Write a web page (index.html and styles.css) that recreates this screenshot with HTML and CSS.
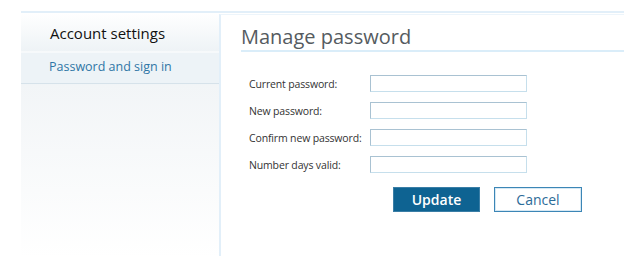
FILE: index.html
```html
<!DOCTYPE html>
<html lang="en">
<head>
    <meta charset="UTF-8">
    <title>Manage password</title>
    <link rel="stylesheet" href="styles.css">
</head>
<body>
    <div class="layout">
        <div class="sidebar">
            <div class="sidebar-title">Account settings</div>
            <a class="nav-item" href="#">Password and sign in</a>
        </div>

        <div class="main">
            <h1>Manage password</h1>

            <form class="password-form">
                <div class="row">
                    <label for="current">Current password:</label>
                    <input type="password" id="current">
                </div>
                <div class="row">
                    <label for="newpass">New password:</label>
                    <input type="password" id="newpass">
                </div>
                <div class="row">
                    <label for="confirm">Confirm new password:</label>
                    <input type="password" id="confirm">
                </div>
                <div class="row">
                    <label for="days">Number days valid:</label>
                    <input type="text" id="days">
                </div>

                <div class="actions">
                    <button type="submit" class="btn btn-primary">Update</button>
                    <button type="button" class="btn btn-secondary">Cancel</button>
                </div>
            </form>
        </div>
    </div>
</body>
</html>
```

FILE: styles.css
```css
body {
    margin: 0;
    background: #fff;
    font-family: 'Open Sans', 'DejaVu Sans', sans-serif;
    color: #333;
}
.layout {
    display: flex;
    margin: 11px 0 0 21px;
    height: 245px;
    border-top: 2px solid #e2eff9;
}
.sidebar {
    width: 198px;
    background: linear-gradient(to bottom, #fff 0, #eef3f6 38px, #fff 39px, #edf3f7 40px, #edf3f7 70px, #f2f5f7 72px, #fff 100%);
}
.sidebar-title {
    height: 38px;
    padding-left: 29px;
    font-size: 15px;
    line-height: 40px;
    color: #111;
}
.nav-item {
    display: block;
    height: 31px;
    margin-top: 1px;
    padding-left: 28px;
    font-size: 12.5px;
    line-height: 29px;
    color: #2f76a6;
    text-decoration: none;
    border-bottom: 1px solid #d6e2ea;
}
.main {
    flex: 1;
    margin-top: 1px;
    padding-left: 20px;
    border-left: 2px solid #e2eff9;
    border-top: 1px solid #edf5fb;
}
h1 {
    margin: 0;
    padding: 9px 0 0;
    height: 26px;
    font-size: 20px;
    font-weight: normal;
    line-height: 25px;
    color: #555b60;
    border-bottom: 2px solid #daedf9;
}
.password-form {
    padding: 23px 0 0 8px;
}
.row {
    display: flex;
    align-items: center;
    height: 17px;
    margin-bottom: 10px;
}
label {
    width: 121px;
    font-size: 10.5px;
    letter-spacing: -0.15px;
    white-space: nowrap;
    color: #333;
}
input {
    box-sizing: border-box;
    width: 157px;
    height: 17px;
    margin: 0;
    border: 1px solid #c6dfec;
    border-left-color: #a9c2d2;
    border-top-color: #a9c2d2;
    background: #fff;
}
.actions {
    display: flex;
    gap: 14px;
    margin: 14px 0 0 144px;
}
.btn {
    box-sizing: border-box;
    width: 88px;
    height: 25px;
    font-family: inherit;
    font-size: 14px;
    cursor: pointer;
}
.btn-primary {
    width: 87px;
    background: #0e6392;
    color: #fff;
    font-weight: 600;
    border: 1px solid #3a7ea6;
}
.btn-secondary {
    background: #fff;
    color: #2c6b98;
    border: 1px solid #3c86b6;
    box-shadow: inset 0 0 0 1px #d6e8f3;
}
```
